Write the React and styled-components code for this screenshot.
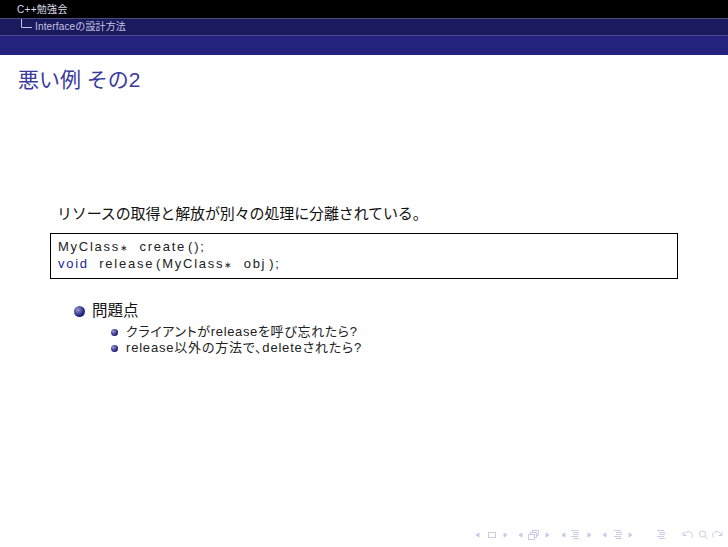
import React from 'react'
import styled, { createGlobalStyle } from 'styled-components'

const Global = createGlobalStyle`
  html, body { margin: 0; padding: 0; background: #fff; }
  body { font-family: "Liberation Sans", "Noto Sans CJK JP", sans-serif; }
`

const Slide = styled.div`
  width: 728px;
  height: 547px;
  display: flex;
  flex-direction: column;
  overflow: hidden;
  background: #fff;
`

const SectionBar = styled.div`
  height: 18px;
  background: #000;
  color: #dcdcec;
  font-size: 10px;
  line-height: 19px;
  padding-left: 17px;
  letter-spacing: 0.3px;
`

const SubsectionBar = styled.div`
  height: 18px;
  background: #1a1a5e;
  border-top: 1px solid #4a4a80;
  border-bottom: 1px solid #4a4a80;
  box-sizing: border-box;
  color: #c4c4e0;
  font-size: 10px;
  padding-left: 21px;
  display: flex;
  align-items: flex-start;
  gap: 3px;
  line-height: 16px;
  letter-spacing: 0.15px;
`

const TitleBand = styled.div`
  height: 19px;
  background: #23237f;
`

const Title = styled.h1`
  margin: 12px 0 0 18px;
  font-size: 21px;
  line-height: 26px;
  font-weight: 400;
  color: #3a3a9c;
`

const Content = styled.div`
  padding: 110px 50px 0 50px;
  display: flex;
  flex-direction: column;
`

const Lead = styled.p`
  margin: 0 0 0 7px;
  font-size: 15px;
  line-height: 22px;
  letter-spacing: -0.13px;
  color: #111;
`

const CodeBox = styled.pre`
  margin: 8px 0 0 0;
  border: 1px solid #000;
  padding: 4px 7px 0;
  height: 40px;
  font-family: "Liberation Sans", sans-serif;
  font-size: 13px;
  line-height: 17px;
  letter-spacing: 1.75px;
  word-spacing: 5px;
  color: #222;
  white-space: pre;
`

const CodeLine = styled.div`
  height: 17px;
`

const Keyword = styled.span`
  color: #24249a;
`

const Star = styled.span`
  font-size: 9px;
  line-height: 0;
  letter-spacing: 1px;
`

const Paren = styled.span`
  margin-left: ${({ gap }) => gap}px;
`

const Topic = styled.div`
  margin: 22px 0 0 24px;
  display: flex;
  align-items: center;
  gap: 7px;
  font-size: 15.5px;
  line-height: 20px;
  color: #111;
`

const SubList = styled.ul`
  list-style: none;
  margin: 3px 0 0 61px;
  padding: 0;
`

const SubItem = styled.li`
  display: flex;
  align-items: center;
  gap: 8px;
  font-size: 13px;
  line-height: 16px;
  color: #222;
  letter-spacing: ${({ spacing }) => spacing}px;
  font-feature-settings: "palt";
`

const Ball = styled.span`
  flex: none;
  width: ${({ size }) => size}px;
  height: ${({ size }) => size}px;
  border-radius: 50%;
  background: radial-gradient(circle at 35% 35%, #9a9ad8, #24247f 60%, #10104a);
`

const NavBar = styled.div`
  margin-top: auto;
  height: 16px;
  padding: 0 2px 4px 0;
  display: flex;
  justify-content: flex-end;
`

const Corner = () => (
  <svg width="11" height="9" viewBox="0 0 11 9" fill="none">
    <path d="M0.5 0V8.5H11" stroke="#c4c4e0" strokeWidth="1" />
  </svg>
)

const NavIcons = () => (
  <svg width="256" height="16" viewBox="0 0 256 16" fill="none" stroke="#cbcbe7" strokeWidth="1">
    <path d="M9 6L6 8L9 10Z" fill="#cbcbe7" />
    <rect x="18.5" y="5.5" width="7" height="5" />
    <path d="M34 6L37 8L34 10Z" fill="#cbcbe7" />
    <path d="M52 6L49 8L52 10Z" fill="#cbcbe7" />
    <rect x="58.5" y="7.5" width="6" height="5" />
    <path d="M60.5 7.5V5.5H66.5V10.5H64.5M62.5 5.5V3.5H68.5V8.5H66.5" />
    <path d="M76 6L79 8L76 10Z" fill="#cbcbe7" />
    <path d="M95 6L92 8L95 10Z" fill="#cbcbe7" />
    <path d="M101 3.5H108M103 5.5H109M103 7.5H109M101 9.5H108M103 11.5H109" />
    <path d="M118 6L121 8L118 10Z" fill="#cbcbe7" />
    <path d="M136 6L133 8L136 10Z" fill="#cbcbe7" />
    <path d="M144 3.5H151M146 5.5H152M146 7.5H152M144 9.5H151M146 11.5H152" />
    <path d="M159 6L162 8L159 10Z" fill="#cbcbe7" />
    <path d="M187 3.5H194M189 5.5H195M189 7.5H195M187 9.5H194M189 11.5H195" />
    <path d="M213 5V8.5H216.5M214 8.5A4.2 4.2 0 1 1 222 10.5" />
    <circle cx="232.5" cy="7" r="3" />
    <path d="M234.8 9.2L237.5 12" />
    <path d="M252 5V8.5H248.5M251 8.5A4.2 4.2 0 1 0 243 10.5" />
  </svg>
)

export default function App() {
  return (
    <Slide>
      <Global />
      <SectionBar>C++勉強会</SectionBar>
      <SubsectionBar>
        <Corner />
        Interfaceの設計方法
      </SubsectionBar>
      <TitleBand />
      <Title>悪い例 その2</Title>
      <Content>
        <Lead>リソースの取得と解放が別々の処理に分離されている。</Lead>
        <CodeBox>
          <CodeLine>MyClass<Star>∗</Star> create<Paren gap={2}>();</Paren></CodeLine>
          <CodeLine>
            <Keyword>void</Keyword> release<Paren gap={2}>(</Paren>MyClass<Star>∗</Star> obj<Paren gap={3}>);</Paren>
          </CodeLine>
        </CodeBox>
        <Topic>
          <Ball size={11} />
          問題点
        </Topic>
        <SubList>
          <SubItem spacing={0.65}>
            <Ball size={7} />
            クライアントがreleaseを呼び忘れたら?
          </SubItem>
          <SubItem spacing={0.8}>
            <Ball size={7} />
            release以外の方法で、deleteされたら?
          </SubItem>
        </SubList>
      </Content>
      <NavBar>
        <NavIcons />
      </NavBar>
    </Slide>
  )
}
